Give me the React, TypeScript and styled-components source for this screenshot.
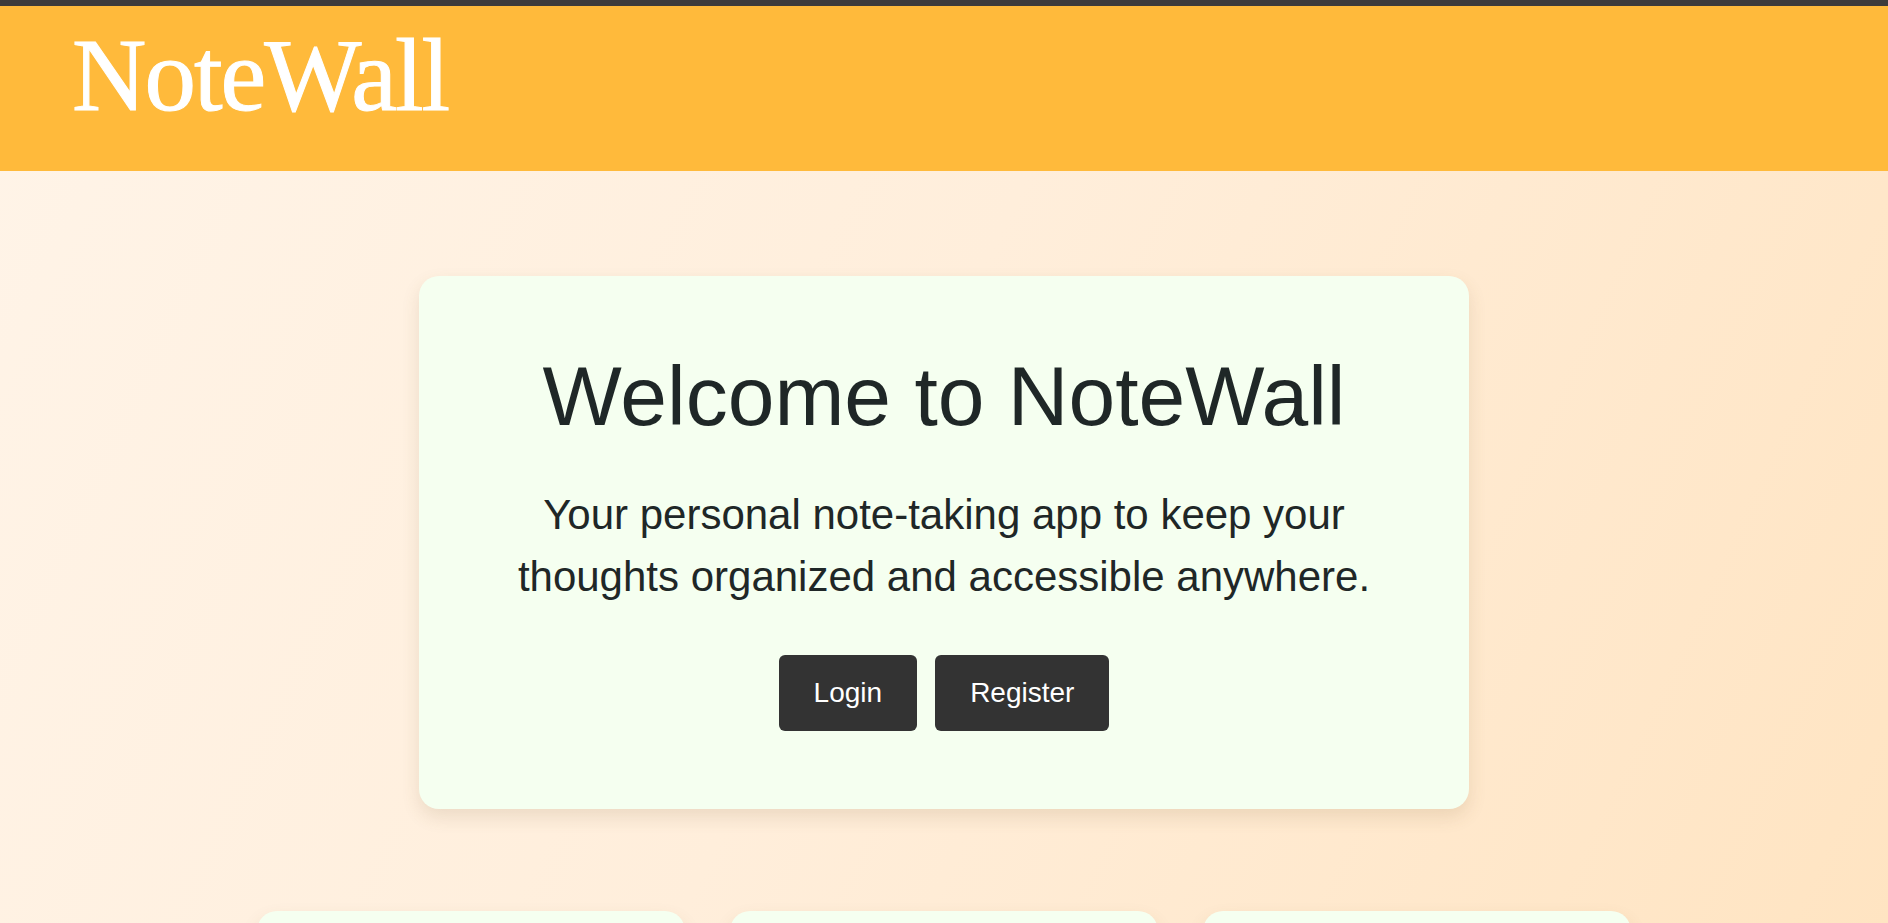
import React from "react";
import styled, { createGlobalStyle } from "styled-components";

const GlobalStyle = createGlobalStyle`
  html, body {
    margin: 0;
    padding: 0;
  }
  body {
    font-family: "Liberation Sans", Arial, sans-serif;
    background: linear-gradient(115deg, #fff4e8 0%, #ffeedb 45%, #ffe3bf 100%);
    min-height: 100vh;
  }
`;

// feature cards sit just below the fold
const features = ["notes", "organize", "anywhere"];

const SPage = styled.div`
  min-height: 100vh;
  display: flex;
  flex-direction: column;
`;

const SHeader = styled.header`
  border-top: 6px solid #3d3b3b;
  background: #ffba3b;
  height: 171px;
  box-sizing: border-box;
  padding: 13px 72px 0;
`;

const SLogo = styled.h1`
  margin: 0;
  font-family: "Liberation Serif", "Times New Roman", serif;
  font-weight: 400;
  font-size: 103px;
  line-height: 112px;
  letter-spacing: -2px;
  color: #ffffff;
  -webkit-text-stroke: 1px #ffffff;
`;

const SMain = styled.main`
  display: flex;
  flex-direction: column;
  align-items: center;
  padding-top: 105px;
  gap: 102px;
`;

const SHero = styled.section`
  width: 1050px;
  box-sizing: border-box;
  padding: 73px 40px 78px;
  background: #f5fff0;
  border-radius: 20px;
  box-shadow: 0 8px 18px rgba(120, 90, 50, 0.14);
  text-align: center;
  color: #1f2727;
`;

const STitle = styled.h2`
  margin: 0;
  font-size: 84px;
  font-weight: 400;
  line-height: 94px;
`;

const SLead = styled.p`
  margin: 41px auto 0;
  max-width: 880px;
  font-size: 42px;
  line-height: 62px;
`;

const SActions = styled.div`
  display: flex;
  justify-content: center;
  gap: 18px;
  margin-top: 47px;
`;

const SButton = styled.button`
  font-family: "Liberation Sans", Arial, sans-serif;
  font-size: 28px;
  line-height: 32px;
  padding: 22px 35px;
  background: #333333;
  color: #ffffff;
  border: none;
  border-radius: 6px;
  cursor: pointer;
`;

const SFeatures = styled.section`
  display: grid;
  grid-template-columns: repeat(3, 428px);
  gap: 45px;
  padding-bottom: 80px;
`;

const SFeatureCard = styled.div`
  min-height: 240px;
  background: #f5fff0;
  border-radius: 20px;
  box-shadow: 0 8px 18px rgba(120, 90, 50, 0.12);
`;

export default function App() {
  return (
    <SPage>
      <GlobalStyle />
      <SHeader>
        <SLogo>NoteWall</SLogo>
      </SHeader>
      <SMain>
        <SHero>
          <STitle>Welcome to NoteWall</STitle>
          <SLead>
            Your personal note-taking app to keep your thoughts organized and
            accessible anywhere.
          </SLead>
          <SActions>
            <SButton>Login</SButton>
            <SButton>Register</SButton>
          </SActions>
        </SHero>
        <SFeatures>
          {features.map((f) => (
            <SFeatureCard key={f} />
          ))}
        </SFeatures>
      </SMain>
    </SPage>
  );
}
